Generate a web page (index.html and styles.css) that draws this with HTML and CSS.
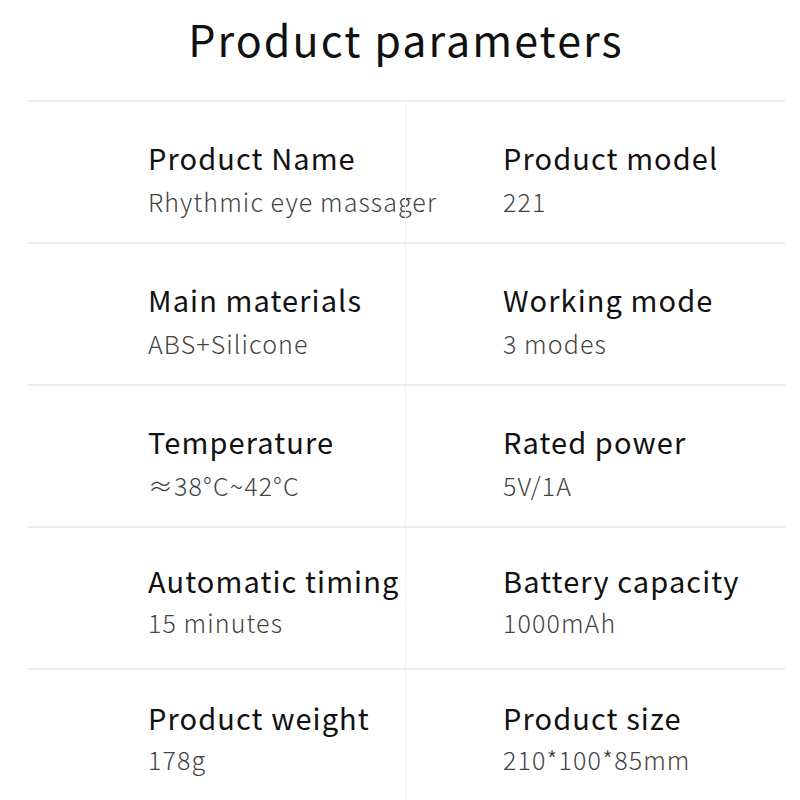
FILE: index.html
```html
<!DOCTYPE html>
<html>
<head>
<meta charset="utf-8">
<link rel="stylesheet" href="styles.css">
</head>
<body>
<h1 class="title">Product parameters</h1>
<div class="table">
  <div class="cell left"><div class="label">Product Name</div><div class="value">Rhythmic eye massager</div></div>
  <div class="cell right"><div class="label">Product model</div><div class="value">221</div></div>
  <div class="cell left"><div class="label">Main materials</div><div class="value">ABS+Silicone</div></div>
  <div class="cell right"><div class="label">Working mode</div><div class="value">3 modes</div></div>
  <div class="cell left"><div class="label">Temperature</div><div class="value">≈38°C~42°C</div></div>
  <div class="cell right"><div class="label">Rated power</div><div class="value">5V/1A</div></div>
  <div class="cell left raised"><div class="label">Automatic timing</div><div class="value">15 minutes</div></div>
  <div class="cell right raised"><div class="label">Battery capacity</div><div class="value">1000mAh</div></div>
  <div class="cell left raised-more"><div class="label">Product weight</div><div class="value">178g</div></div>
  <div class="cell right raised-more"><div class="label">Product size</div><div class="value">210*100*85mm</div></div>
</div>
</body>
</html>
```
FILE: styles.css
```css
html, body {
  margin: 0;
  padding: 0;
  background: #fff;
  width: 800px;
  height: 800px;
  overflow: hidden;
  font-family: "Noto Sans CJK SC", "Noto Sans", sans-serif;
}
.title {
  margin: 0;
  height: 100px;
  box-sizing: border-box;
  padding-top: 8px;
  padding-left: 12px;
  text-align: center;
  font-size: 43px;
  font-weight: 400;
  line-height: 60px;
  letter-spacing: 2.05px;
  color: #111;
}
.table {
  margin-left: 28px;
  width: 757px;
  display: grid;
  grid-template-columns: 377px 380px;
  grid-auto-rows: 142px;
}
.cell {
  border-top: 2px solid #ececec;
  box-sizing: border-box;
  padding-top: 37px;
}
.left {
  padding-left: 120px;
}
.right {
  padding-left: 97px;
  border-left: 1px solid #f0f0f0;
}
.label {
  font-size: 29px;
  line-height: 36px;
  letter-spacing: 1.1px;
  color: #111;
  font-weight: 400;
  white-space: nowrap;
}
.value {
  margin-top: 8px;
  font-size: 25px;
  line-height: 36px;
  letter-spacing: 1.1px;
  color: #444;
  font-weight: 300;
  white-space: nowrap;
}
.raised {
  padding-top: 34px;
}
.raised .value {
  margin-top: 6px;
}
.raised-more {
  padding-top: 29px;
}
.raised-more .value {
  margin-top: 6px;
}
```
